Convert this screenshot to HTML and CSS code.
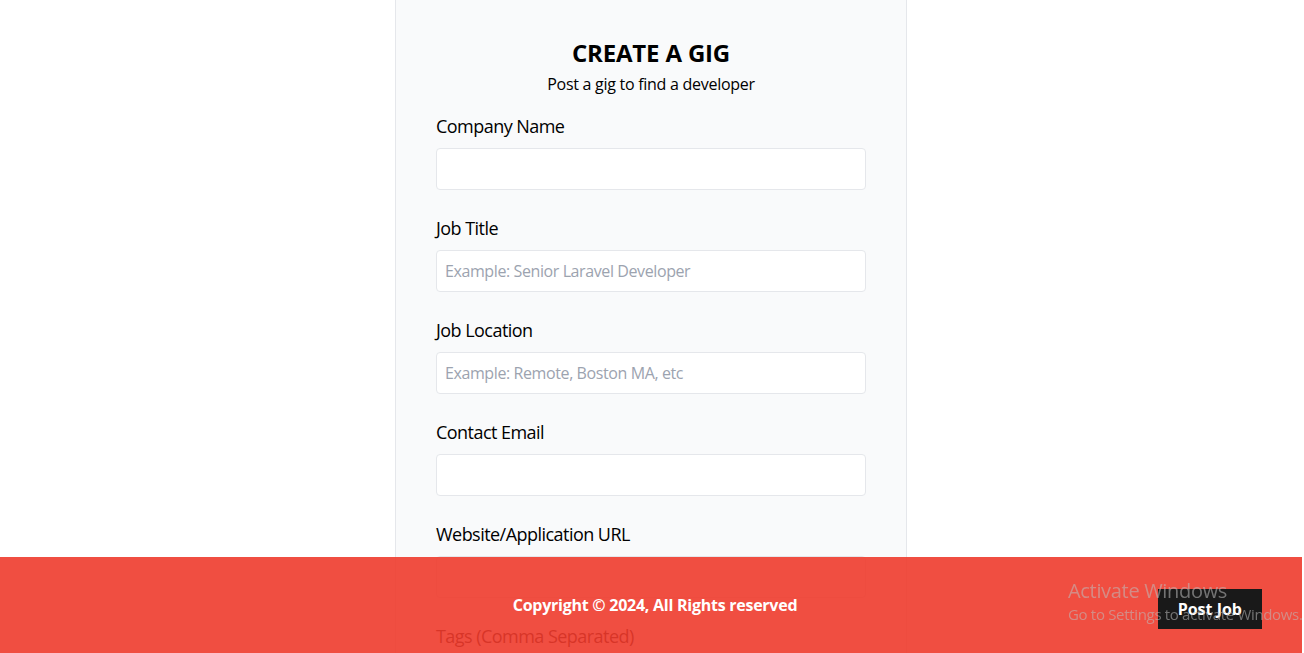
FILE: index.html
```html
<!DOCTYPE html>
<html lang="en">
<head>
<meta charset="utf-8">
<title>Create a Gig</title>
<link rel="stylesheet" href="styles.css">
</head>
<body>
<main class="page">
  <div class="card">
    <header class="card-header">
      <h2 class="card-title">Create a Gig</h2>
      <p class="card-sub">Post a gig to find a developer</p>
    </header>
    <form class="form">
      <div class="field">
        <label class="label" for="company">Company Name</label>
        <input class="input" type="text" id="company" name="company">
      </div>
      <div class="field">
        <label class="label" for="title">Job Title</label>
        <input class="input" type="text" id="title" name="title" placeholder="Example: Senior Laravel Developer">
      </div>
      <div class="field">
        <label class="label" for="location">Job Location</label>
        <input class="input" type="text" id="location" name="location" placeholder="Example: Remote, Boston MA, etc">
      </div>
      <div class="field">
        <label class="label" for="email">Contact Email</label>
        <input class="input" type="text" id="email" name="email">
      </div>
      <div class="field">
        <label class="label" for="website">Website/Application URL</label>
        <input class="input" type="text" id="website" name="website">
      </div>
      <div class="field">
        <label class="label" for="tags">Tags (Comma Separated)</label>
        <input class="input" type="text" id="tags" name="tags" placeholder="Example: Laravel, Backend, Postgres, etc">
      </div>
      <div class="field">
        <label class="label" for="logo">Company Logo</label>
        <input class="input" type="text" id="logo" name="logo">
      </div>
      <div class="field">
        <label class="label" for="description">Job Description</label>
        <textarea class="input textarea" id="description" name="description" rows="10" placeholder="Include tasks, requirements, salary, etc"></textarea>
      </div>
      <div class="field">
        <button class="submit" type="button">Create Gig</button>
        <a class="back" href="#">Back</a>
      </div>
    </form>
  </div>
</main>
<footer class="footer">
  <p class="copyright">Copyright &copy; 2024, All Rights reserved</p>
  <a class="post-job" href="#">Post Job</a>
</footer>
<div class="watermark">
  <div class="wm-title">Activate Windows</div>
  <div class="wm-sub">Go to Settings to activate Windows.</div>
</div>
</body>
</html>
```
FILE: styles.css
```css
* {
  box-sizing: border-box;
}

html, body {
  margin: 0;
  padding: 0;
}

body {
  font-family: "Segoe UI", "Open Sans", "Noto Sans", sans-serif;
  font-size: 16px;
  line-height: 24px;
  letter-spacing: -0.025em;
  color: #000;
  background: #fff;
  margin-right: 2px;
  overflow: hidden;
}

.page {
  display: block;
}

.card {
  width: 512px;
  margin: -5px auto 0;
  padding: 40px;
  background: #f9fafb;
  border: 1px solid #e5e7eb;
  border-radius: 4px;
}

.card-header {
  text-align: center;
}

.card-title {
  margin: 1px 0 3px;
  font-size: 24px;
  line-height: 32px;
  font-weight: 700;
  letter-spacing: -0.007em;
  text-transform: uppercase;
}

.card-sub {
  margin: 0 0 16px;
  letter-spacing: -0.017em;
}

.form {
  margin: 0;
}

.field {
  margin-bottom: 24px;
}

.label {
  display: inline-block;
  font-size: 18px;
  line-height: 28px;
  letter-spacing: -0.03em;
  margin-bottom: 8px;
}

.input {
  display: block;
  width: 100%;
  height: 42px;
  padding: 8px;
  font: inherit;
  letter-spacing: -0.025em;
  color: #000;
  background: #fff;
  border: 1px solid #e5e7eb;
  border-radius: 4px;
  outline: none;
}

.input::placeholder {
  color: #9ca3af;
}

.textarea {
  height: auto;
  resize: none;
}

.submit {
  font: inherit;
  color: #fff;
  background: #ef3b2d;
  border: 0;
  border-radius: 4px;
  padding: 8px 16px;
}

.back {
  color: #000;
  margin-left: 16px;
}

.footer {
  position: fixed;
  left: 0;
  bottom: 0;
  width: calc(100% - 2px);
  height: 96px;
  display: flex;
  align-items: center;
  justify-content: center;
  background: #ef3b2d;
  color: #fff;
  font-weight: 700;
  letter-spacing: -0.016em;
  opacity: 0.9;
}

.copyright {
  margin: 0 0 0 8px;
}

.post-job {
  position: absolute;
  top: 32px;
  right: 40px;
  background: #000;
  color: #fff;
  text-decoration: none;
  letter-spacing: 0;
  padding: 8px 20px;
}

.watermark {
  position: fixed;
  left: 1068px;
  top: 578px;
  color: rgba(190, 190, 190, 0.55);
  letter-spacing: -0.02em;
  pointer-events: none;
  white-space: nowrap;
}

.wm-title {
  font-size: 20px;
  line-height: 26px;
}

.wm-sub {
  font-size: 15px;
  line-height: 20px;
}
```
